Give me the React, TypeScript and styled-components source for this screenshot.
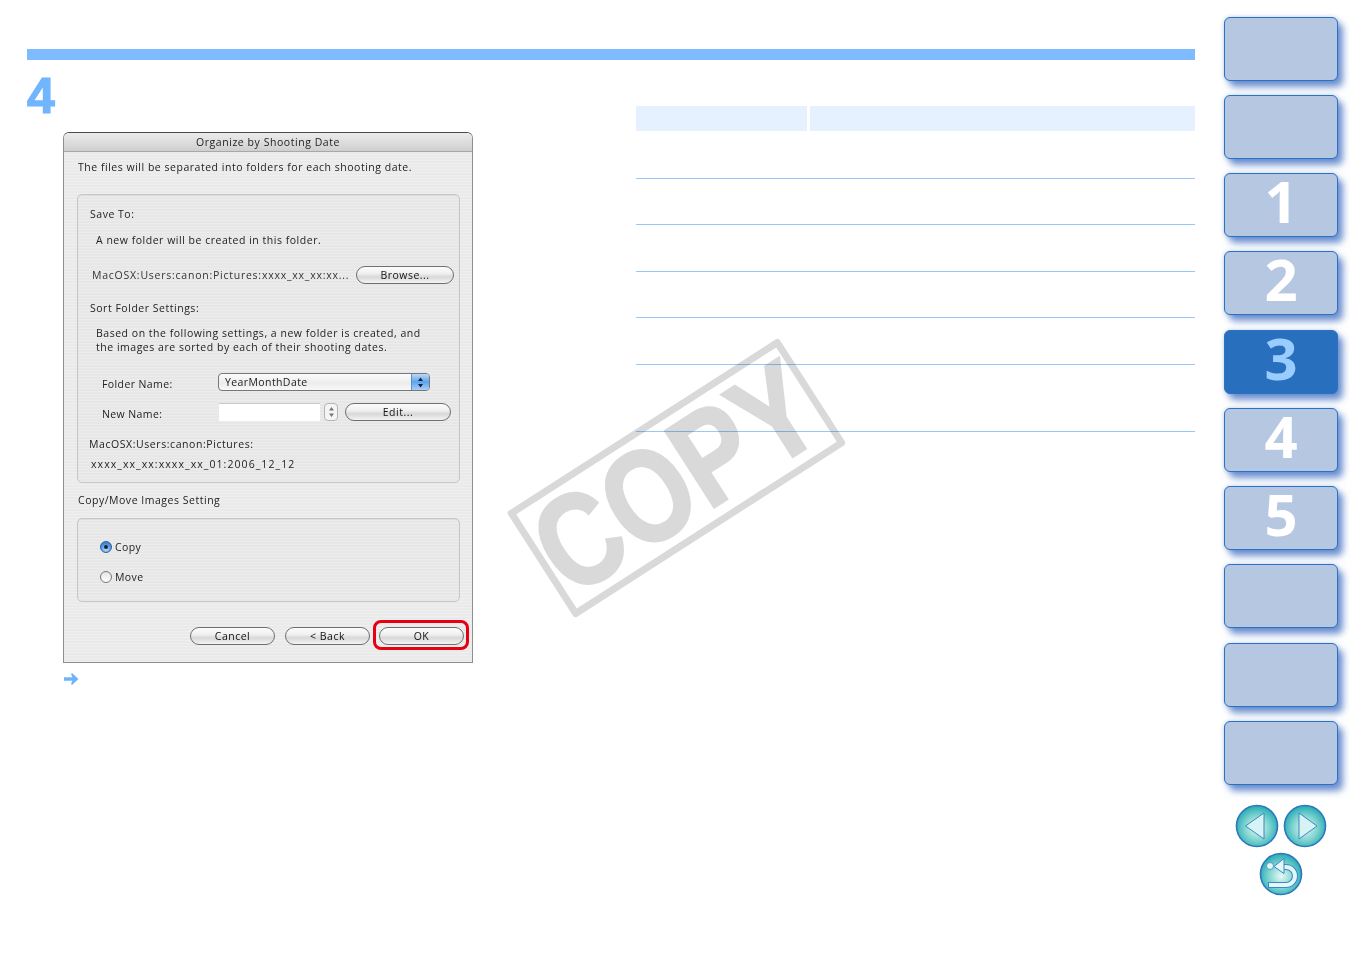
import React from 'react';
import styled, { createGlobalStyle } from 'styled-components';

const GlobalStyle = createGlobalStyle`
  html, body {
    margin: 0;
    padding: 0;
    background: #fff;
    overflow: hidden;
  }
`;

const Page = styled.div`
  position: relative;
  display: flex;
  width: 1350px;
  height: 954px;
  overflow: hidden;
  background: #fff;
`;

const Main = styled.main`
  width: 1168px;
  margin-left: 27px;
  padding-top: 49px;
`;

const TopBar = styled.div`
  height: 11px;
  background: #80bbff;
`;

const Columns = styled.div`
  display: flex;
`;

const LeftColumn = styled.section`
  width: 609px;
`;

const RightColumn = styled.section`
  flex: 1;
  padding-top: 46px;
`;

const StepNumber = styled.div`
  height: 72px;
  font-family: 'Liberation Sans', Arial, sans-serif;
  font-weight: 700;
  font-size: 50px;
  line-height: 72px;
  color: #72b5ff;
  -webkit-text-stroke: 1.2px #72b5ff;
`;

const Dialog = styled.div`
  width: 408px;
  height: 529px;
  margin-left: 36px;
  border: 1px solid #8e8e8e;
  border-top-color: #4a4a4a;
  border-radius: 6px 6px 0 0;
  overflow: hidden;
  font-family: 'Open Sans', Arial, sans-serif;
  font-size: 10.5px;
  color: #222;
  background: repeating-linear-gradient(#efefef 0 1px, #eaeaea 1px 3px);
`;

const TitleBar = styled.div`
  height: 18px;
  border-bottom: 1px solid #a8a8a8;
  background: linear-gradient(#ececec, #cfcfcf);
  text-align: center;
  font-size: 10.5px;
  letter-spacing: 0.55px;
  line-height: 18px;
`;

const DialogBody = styled.div`
  padding: 0 12px 0 13px;
`;

const Line = styled.div<{ $top?: number; $left?: number; $spacing?: number }>`
  display: flex;
  align-items: center;
  height: 18px;
  margin-top: ${(p) => p.$top ?? 0}px;
  padding-left: ${(p) => p.$left ?? 0}px;
  letter-spacing: ${(p) => p.$spacing ?? 0.52}px;
  white-space: nowrap;
`;

const Paragraph = styled.div`
  margin-top: 9px;
  padding-left: 18px;
  line-height: 14px;
  letter-spacing: 0.52px;
  white-space: nowrap;
`;

const Group = styled.div<{ $height: number; $top: number }>`
  box-sizing: border-box;
  height: ${(p) => p.$height}px;
  margin-top: ${(p) => p.$top}px;
  padding: 10px 0 0 0;
  border: 1px solid #c6c6c6;
  border-radius: 5px;
  background: rgba(0, 0, 0, 0.012);
  box-shadow: inset 0 1px 1px rgba(0, 0, 0, 0.05);
`;

const PathRow = styled.div`
  display: flex;
  align-items: center;
  justify-content: space-between;
  height: 18px;
  margin-top: 17px;
  padding: 0 5px 0 14px;
`;

const PathText = styled.span`
  font-size: 10.5px;
  letter-spacing: 0.76px;
  color: #333;
  white-space: nowrap;
`;

const FieldRow = styled.div<{ $top: number }>`
  display: flex;
  align-items: center;
  height: 18px;
  margin-top: ${(p) => p.$top}px;
  padding-left: 24px;
`;

const FieldLabel = styled.span`
  width: 116px;
  padding-top: 3px;
  letter-spacing: 0.4px;
`;

const AquaButton = styled.button<{ $width: number }>`
  box-sizing: border-box;
  width: ${(p) => p.$width}px;
  height: 18px;
  padding: 0;
  border: 1px solid #6f6f6f;
  border-radius: 9px;
  background: linear-gradient(#fcfcfc 0%, #f0f0f0 40%, #d8d8d8 62%, #f4f4f4 100%);
  font-family: inherit;
  font-size: 10.5px;
  letter-spacing: 0.5px;
  line-height: 16px;
  color: #111;
`;

const Select = styled.div`
  box-sizing: border-box;
  display: flex;
  width: 212px;
  height: 18px;
  border: 1px solid #777;
  border-radius: 4px;
  overflow: hidden;
  background: linear-gradient(#fcfcfc, #ececec 55%, #f8f8f8);
`;

const SelectValue = styled.span`
  flex: 1;
  padding-left: 6px;
  line-height: 16px;
  letter-spacing: 0.4px;
`;

const SelectCap = styled.span`
  display: flex;
  align-items: center;
  justify-content: center;
  width: 17px;
  border-left: 1px solid #5d8fc9;
  background: linear-gradient(#bcd8f6, #5fa3ea 50%, #a8d0f8);
`;

const TextInput = styled.div`
  width: 101px;
  height: 17px;
  margin-left: 1px;
  border-top: 1px solid #c8c8c8;
  background: #fff;
`;

const Stepper = styled.div`
  box-sizing: border-box;
  display: flex;
  align-items: center;
  justify-content: center;
  width: 14px;
  height: 18px;
  margin: 0 7px 0 4px;
  border: 1px solid #b4b4b4;
  border-radius: 4px;
  background: #f4f4f4;
`;

const RadioRow = styled.label<{ $top: number }>`
  display: flex;
  align-items: center;
  gap: 3px;
  height: 18px;
  margin-top: ${(p) => p.$top}px;
  padding-left: 22px;
  letter-spacing: 0.4px;
`;

const Radio = styled.span<{ $checked?: boolean }>`
  box-sizing: border-box;
  display: flex;
  align-items: center;
  justify-content: center;
  width: 12px;
  height: 12px;
  border: 1px solid ${(p) => (p.$checked ? '#2d5f9e' : '#777')};
  border-radius: 50%;
  background: ${(p) =>
    p.$checked ? 'radial-gradient(circle at 50% 75%, #b6dcfb, #3f86d6 70%)' : 'linear-gradient(#e4e4e4, #fff)'};

  &::after {
    content: '';
    display: ${(p) => (p.$checked ? 'block' : 'none')};
    width: 4px;
    height: 4px;
    border-radius: 50%;
    background: #10233f;
  }
`;

const ButtonBar = styled.div`
  display: flex;
  justify-content: flex-end;
  gap: 10px;
  margin: 25px -4px 0 0;
`;

const Highlighted = styled.div`
  position: relative;
  margin-left: -1px;

  &::after {
    content: '';
    position: absolute;
    inset: -7px -5px -5px -6px;
    border: 3px solid #e60012;
    border-radius: 8px;
  }
`;

const ResultArrow = styled.div`
  display: flex;
  height: 14px;
  margin: 9px 0 0 36px;
`;

const TableHead = styled.div`
  display: flex;
  gap: 3px;
  height: 25px;
`;

const HeadCell = styled.div<{ $width?: number }>`
  flex: ${(p) => (p.$width ? `0 0 ${p.$width}px` : 1)};
  background: #e5f1fe;
`;

const TableRow = styled.div<{ $height: number }>`
  box-sizing: border-box;
  height: ${(p) => p.$height}px;
  border-bottom: 1px solid #99c8f7;
`;

const Stamp = styled.div`
  position: absolute;
  left: 515px;
  top: 415px;
  box-sizing: border-box;
  display: flex;
  align-items: center;
  justify-content: center;
  width: 323px;
  height: 126px;
  border: 7px solid #d9d9d9;
  border-radius: 3px;
  transform: rotate(-32.7deg);
  mix-blend-mode: multiply;
`;

const StampText = styled.span`
  font-family: 'Liberation Sans', Arial, sans-serif;
  font-weight: 700;
  font-size: 132px;
  line-height: 1;
  color: #d9d9d9;
  -webkit-text-stroke: 2.5px #d9d9d9;
  transform: scaleX(0.82);
`;

const Rail = styled.nav`
  display: flex;
  flex-direction: column;
  gap: 14.25px;
  width: 114px;
  margin-left: 29px;
  padding-top: 16.5px;
`;

const RailButton = styled.div<{ $active?: boolean }>`
  box-sizing: border-box;
  flex: none;
  height: 64px;
  border: 1.5px solid #2b72c2;
  border-radius: 6px;
  background: ${(p) => (p.$active ? '#2870bd' : '#b5c7e1')};
  box-shadow: 5px 6px 7px rgba(50, 100, 190, 0.7), 0 0 4px rgba(50, 100, 190, 0.3);
  text-align: center;
  font-family: 'Open Sans', Arial, sans-serif;
  font-weight: 700;
  font-size: 58px;
  line-height: 54px;
  color: ${(p) => (p.$active ? '#99ccff' : '#fff')};
`;

const RoundNav = styled.div`
  display: flex;
  flex-wrap: wrap;
  justify-content: center;
  gap: 4px;
  margin-top: 4.5px;
`;

const RoundNavBottom = styled.div`
  display: flex;
  justify-content: center;
  margin-top: -10px;
`;

const CircleFace = ({ id }: { id: string }) => (
  <>
    <defs>
      <radialGradient id={id} cx="50%" cy="55%" r="55%">
        <stop offset="0%" stopColor="#e6f8f6" />
        <stop offset="55%" stopColor="#7fd4cf" />
        <stop offset="100%" stopColor="#25a9b5" />
      </radialGradient>
    </defs>
    <circle cx="22" cy="22" r="20.5" fill={`url(#${id})`} stroke="#2b78bd" strokeWidth="1.6" />
  </>
);

const PrevIcon = () => (
  <svg width="44" height="44" viewBox="0 0 44 44">
    <CircleFace id="prevFace" />
    <path d="M10.5 22 29 9v26z" fill="#d8f3f3" stroke="#3a86c8" strokeWidth="1" />
  </svg>
);

const NextIcon = () => (
  <svg width="44" height="44" viewBox="0 0 44 44">
    <CircleFace id="nextFace" />
    <path d="M34 22 16 9v26z" fill="#d8f3f3" stroke="#3a86c8" strokeWidth="1" />
  </svg>
);

const ReturnIcon = () => (
  <svg width="44" height="44" viewBox="0 0 44 44">
    <CircleFace id="returnFace" />
    <path d="M24 15h3a9 9 0 0 1 0 18H9" fill="none" stroke="#3a86c8" strokeWidth="6" />
    <path d="M24 15h3a9 9 0 0 1 0 18H10" fill="none" stroke="#e4f7f6" strokeWidth="4" />
    <path d="M15 14.500 25 6.500v15z" fill="#e4f7f6" stroke="#3a86c8" strokeWidth="1" />
    <circle cx="11" cy="14" r="3.500" fill="#e4f7f6" stroke="#3a86c8" strokeWidth="0.8" />
  </svg>
);

const SelectArrows = () => (
  <svg width="7" height="11" viewBox="0 0 7 11">
    <path d="M3.500 0.500 6 4H1zM3.500 10.500 6 7H1z" fill="#10233f" />
  </svg>
);

const StepperArrows = () => (
  <svg width="7" height="12" viewBox="0 0 7 12">
    <path d="M3.500 1 6 4.500H1zM3.500 11 6 7.500H1z" fill="#777" />
  </svg>
);

const App = () => {
  const rail = ['', '', '1', '2', '3', '4', '5', '', '', ''];

  return (
    <Page>
      <GlobalStyle />
      <Main>
        <TopBar />
        <Columns>
          <LeftColumn>
            <StepNumber>4</StepNumber>
            <Dialog>
              <TitleBar>Organize by Shooting Date</TitleBar>
              <DialogBody>
                <Line $top={6} $left={1}>The files will be separated into folders for each shooting date.</Line>
                <Group $height={289} $top={18}>
                  <Line $left={12}>Save To:</Line>
                  <Line $top={8} $left={18}>A new folder will be created in this folder.</Line>
                  <PathRow>
                    <PathText>MacOSX:Users:canon:Pictures:xxxx_xx_xx:xx...</PathText>
                    <AquaButton $width={98}>Browse...</AquaButton>
                  </PathRow>
                  <Line $top={15} $left={12}>Sort Folder Settings:</Line>
                  <Paragraph>
                    Based on the following settings, a new folder is created, and
                    <br />
                    the images are sorted by each of their shooting dates.
                  </Paragraph>
                  <FieldRow $top={19}>
                    <FieldLabel>Folder Name:</FieldLabel>
                    <Select>
                      <SelectValue>YearMonthDate</SelectValue>
                      <SelectCap>
                        <SelectArrows />
                      </SelectCap>
                    </Select>
                  </FieldRow>
                  <FieldRow $top={12}>
                    <FieldLabel>New Name:</FieldLabel>
                    <TextInput />
                    <Stepper>
                      <StepperArrows />
                    </Stepper>
                    <AquaButton $width={106}>Edit...</AquaButton>
                  </FieldRow>
                  <Line $top={14} $left={11} $spacing={0.57}>MacOSX:Users:canon:Pictures:</Line>
                  <Line $top={2} $left={13} $spacing={1.07}>xxxx_xx_xx:xxxx_xx_01:2006_12_12</Line>
                </Group>
                <Line $top={8} $left={1}>Copy/Move Images Setting</Line>
                <Group $height={84} $top={9}>
                  <RadioRow $top={9}>
                    <Radio $checked />
                    Copy
                  </RadioRow>
                  <RadioRow $top={12}>
                    <Radio />
                    Move
                  </RadioRow>
                </Group>
                <ButtonBar>
                  <AquaButton $width={85}>Cancel</AquaButton>
                  <AquaButton $width={85}>&lt; Back</AquaButton>
                  <Highlighted>
                    <AquaButton $width={85}>OK</AquaButton>
                  </Highlighted>
                </ButtonBar>
              </DialogBody>
            </Dialog>
            <ResultArrow>
              <svg width="16" height="14" viewBox="0 0 16 14">
                <path d="M1 7h10" stroke="#6fb3ff" strokeWidth="3.500" />
                <path d="M9 1 15.500 7 9 13l-1-1 2-5-2-5z" fill="#6fb3ff" />
              </svg>
            </ResultArrow>
          </LeftColumn>
          <RightColumn>
            <TableHead>
              <HeadCell $width={171} />
              <HeadCell />
            </TableHead>
            <TableRow $height={48} />
            <TableRow $height={46} />
            <TableRow $height={47} />
            <TableRow $height={46} />
            <TableRow $height={47} />
            <TableRow $height={67} />
          </RightColumn>
        </Columns>
      </Main>
      <Rail>
        {rail.map((label, index) => (
          <RailButton key={index} $active={label === '3'}>
            {label}
          </RailButton>
        ))}
        <RoundNav>
          <PrevIcon />
          <NextIcon />
        </RoundNav>
        <RoundNavBottom>
          <ReturnIcon />
        </RoundNavBottom>
      </Rail>
      <Stamp>
        <StampText>COPY</StampText>
      </Stamp>
    </Page>
  );
};

export default App;
